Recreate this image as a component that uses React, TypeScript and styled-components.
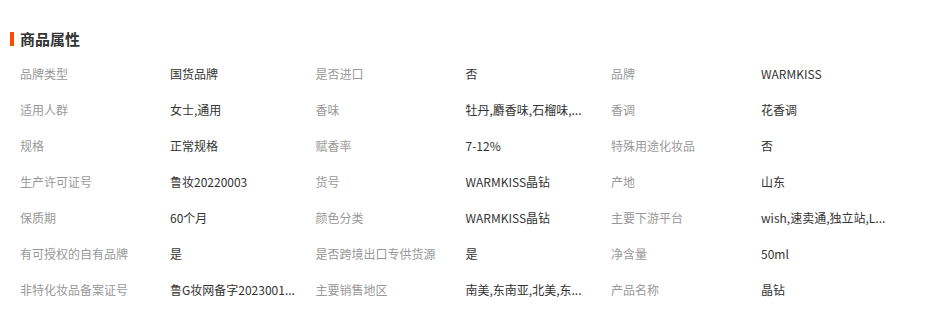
import React from "react";
import styled, { createGlobalStyle } from "styled-components";

const attrs: [string, string][] = [
  ["品牌类型", "国货品牌"],
  ["是否进口", "否"],
  ["品牌", "WARMKISS"],
  ["适用人群", "女士,通用"],
  ["香味", "牡丹,麝香味,石榴味,..."],
  ["香调", "花香调"],
  ["规格", "正常规格"],
  ["赋香率", "7-12%"],
  ["特殊用途化妆品", "否"],
  ["生产许可证号", "鲁妆20220003"],
  ["货号", "WARMKISS晶钻"],
  ["产地", "山东"],
  ["保质期", "60个月"],
  ["颜色分类", "WARMKISS晶钻"],
  ["主要下游平台", "wish,速卖通,独立站,L..."],
  ["有可授权的自有品牌", "是"],
  ["是否跨境出口专供货源", "是"],
  ["净含量", "50ml"],
  ["非特化妆品备案证号", "鲁G妆网备字2023001..."],
  ["主要销售地区", "南美,东南亚,北美,东..."],
  ["产品名称", "晶钻"],
];

const App: React.FC = () => {
  return (
    <>
      <GlobalStyle />
      <Section>
        <Title>商品属性</Title>
        <AttrGrid>
          {attrs.map(([label, value]) => (
            <AttrItem key={label}>
              <AttrLabel>{label}</AttrLabel>
              <AttrValue>{value}</AttrValue>
            </AttrItem>
          ))}
        </AttrGrid>
      </Section>
    </>
  );
};

export default App;

const GlobalStyle = createGlobalStyle`
  body {
    margin: 0;
    background: #fff;
    font-family: "Noto Sans CJK SC", "Liberation Sans", sans-serif;
  }
`;

const Section = styled.div`
  padding: 32px 0 0 10px;
`;

const Title = styled.h3`
  margin: 0;
  display: flex;
  align-items: center;
  height: 14px;
  font-size: 15px;
  line-height: 14px;
  font-weight: bold;
  color: #333;

  &::before {
    content: "";
    display: block;
    width: 4px;
    height: 14px;
    margin-right: 6px;
    background: #ff4a00;
  }
`;

const AttrGrid = styled.div`
  display: grid;
  grid-template-columns: repeat(3, 295.5px);
  grid-auto-rows: 36px;
  margin-top: 10px;
  padding-left: 10px;
`;

const AttrItem = styled.div`
  display: flex;
  align-items: center;
  font-size: 12px;
  line-height: 16px;
`;

const AttrLabel = styled.span`
  width: 150px;
  flex-shrink: 0;
  color: #999;
  white-space: nowrap;
`;

const AttrValue = styled.span`
  color: #333;
  white-space: nowrap;
`;
